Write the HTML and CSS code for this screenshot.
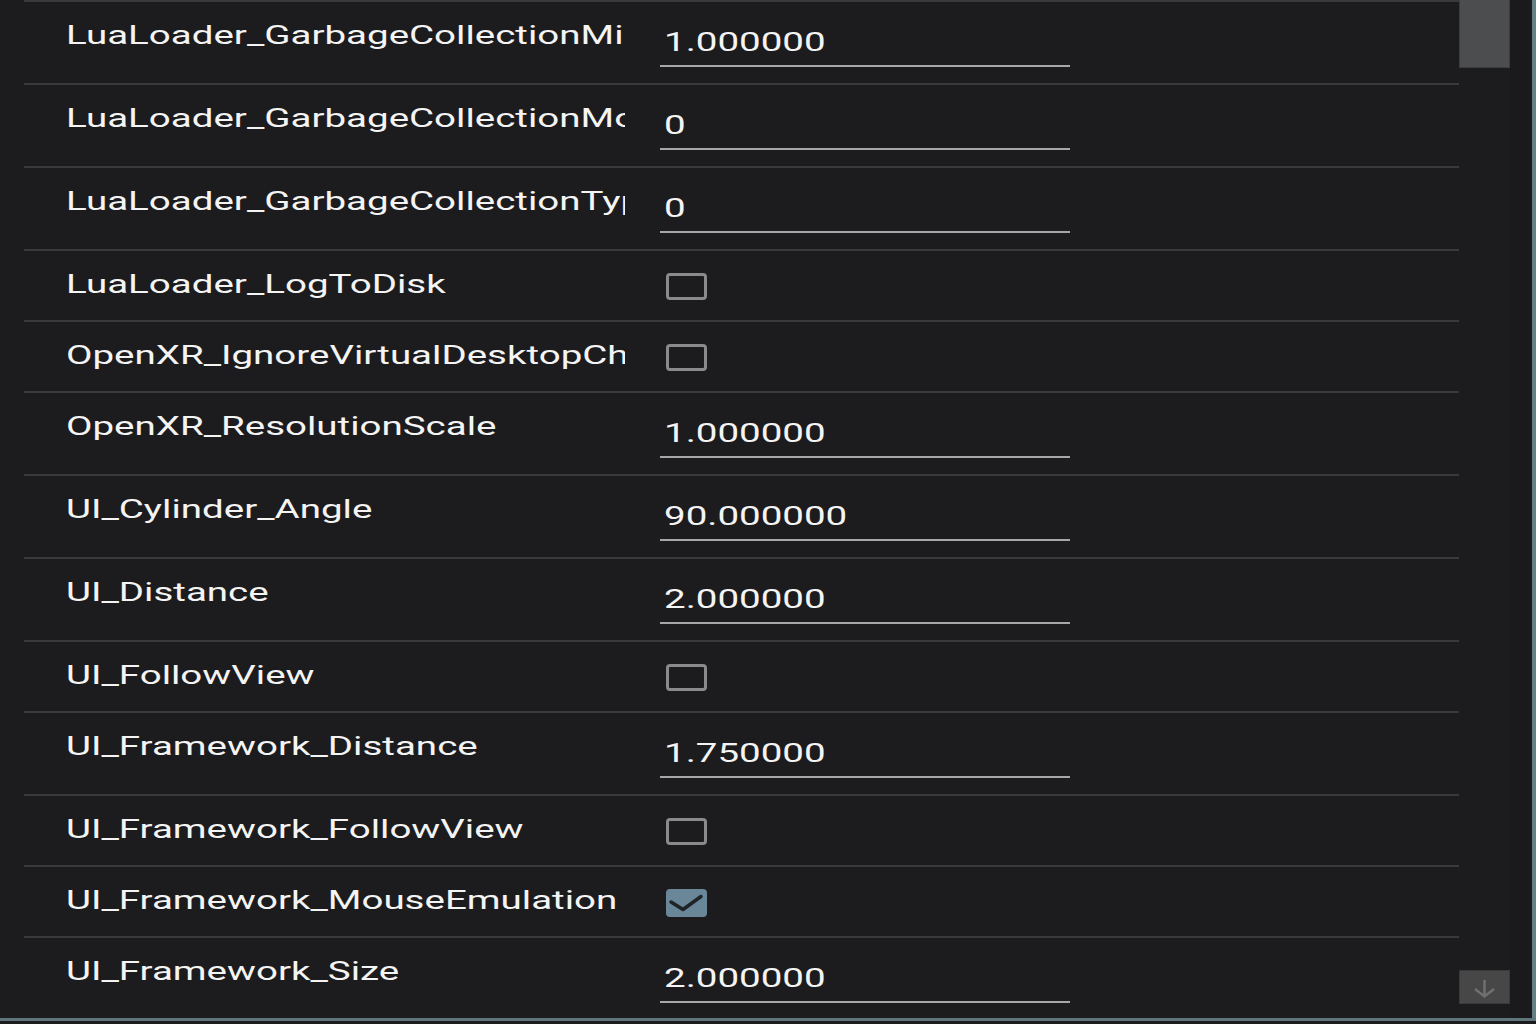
FILE: index.html
```html
<!DOCTYPE html>
<html lang="en">
<head>
    <meta charset="UTF-8">
    <title>Settings</title>
    <link rel="stylesheet" href="styles.css">
</head>
<body>
    <div class="window">
        <div class="settings-list">
            <div class="setting-row text-row">
                <div class="setting-name"><span>LuaLoader_GarbageCollectionMinimumMB</span></div>
                <div class="setting-value"><span class="value-field"><span>1.000000</span></span></div>
            </div>
            <div class="setting-row text-row">
                <div class="setting-name"><span>LuaLoader_GarbageCollectionMode</span></div>
                <div class="setting-value"><span class="value-field"><span>0</span></span></div>
            </div>
            <div class="setting-row text-row">
                <div class="setting-name"><span>LuaLoader_GarbageCollectionType</span></div>
                <div class="setting-value"><span class="value-field"><span>0</span></span></div>
            </div>
            <div class="setting-row check-row">
                <div class="setting-name"><span>LuaLoader_LogToDisk</span></div>
                <div class="setting-value"><span class="checkbox"></span></div>
            </div>
            <div class="setting-row check-row">
                <div class="setting-name"><span>OpenXR_IgnoreVirtualDesktopChecks</span></div>
                <div class="setting-value"><span class="checkbox"></span></div>
            </div>
            <div class="setting-row text-row">
                <div class="setting-name"><span>OpenXR_ResolutionScale</span></div>
                <div class="setting-value"><span class="value-field"><span>1.000000</span></span></div>
            </div>
            <div class="setting-row text-row">
                <div class="setting-name"><span>UI_Cylinder_Angle</span></div>
                <div class="setting-value"><span class="value-field"><span>90.000000</span></span></div>
            </div>
            <div class="setting-row text-row">
                <div class="setting-name"><span>UI_Distance</span></div>
                <div class="setting-value"><span class="value-field"><span>2.000000</span></span></div>
            </div>
            <div class="setting-row check-row">
                <div class="setting-name"><span>UI_FollowView</span></div>
                <div class="setting-value"><span class="checkbox"></span></div>
            </div>
            <div class="setting-row text-row">
                <div class="setting-name"><span>UI_Framework_Distance</span></div>
                <div class="setting-value"><span class="value-field"><span>1.750000</span></span></div>
            </div>
            <div class="setting-row check-row">
                <div class="setting-name"><span>UI_Framework_FollowView</span></div>
                <div class="setting-value"><span class="checkbox"></span></div>
            </div>
            <div class="setting-row check-row">
                <div class="setting-name"><span>UI_Framework_MouseEmulation</span></div>
                <div class="setting-value">
                    <span class="checkbox checked">
                        <svg viewBox="0 0 41 28" width="41" height="28">
                            <path d="M5 13 L17 20.5 L35 7.5" fill="none" stroke="#1f2428" stroke-width="3.5" stroke-linecap="round" stroke-linejoin="round"/>
                        </svg>
                    </span>
                </div>
            </div>
            <div class="setting-row text-row last-row">
                <div class="setting-name"><span>UI_Framework_Size</span></div>
                <div class="setting-value"><span class="value-field"><span>2.000000</span></span></div>
            </div>
        </div>

        <div class="scrollbar">
            <div class="scroll-thumb"></div>
            <div class="scroll-down">
                <svg viewBox="0 0 50 34" width="50" height="34">
                    <path d="M24.5 9 V25 M15 18 L24.5 25.5 L34 18" fill="none" stroke="#707070" stroke-width="2.5"/>
                </svg>
            </div>
        </div>
        <div class="gutter"></div>
    </div>
</body>
</html>
```

FILE: styles.css
```css
* {
    box-sizing: border-box;
    margin: 0;
    padding: 0;
}

body {
    background-color: #1c1c1e;
    font-family: Roboto, 'Liberation Sans', sans-serif;
    color: #f4f4f4;
    width: 1536px;
    height: 1024px;
    overflow: hidden;
}

.window {
    display: flex;
    height: 1021px;
    border-bottom: 3px solid #5f777c;
}

.settings-list {
    width: 1459px;
    padding-left: 24px;
    display: flex;
    flex-direction: column;
}

.setting-row {
    display: flex;
    align-items: flex-start;
    border-top: 2px solid #3a3a3c;
    flex-shrink: 0;
}

.text-row {
    height: 83px;
}

.check-row {
    height: 71px;
}

.last-row {
    height: 84px;
}

/* the panel is drawn wide: glyphs are stretched horizontally */
.setting-name {
    width: 559px;
    margin-left: 42px;
    padding-top: 19px;
    font-size: 25px;
    line-height: 30px;
    white-space: nowrap;
    overflow: hidden;
}

.setting-name span,
.value-field span {
    display: inline-block;
    transform: scaleX(1.54);
    transform-origin: left center;
}

.setting-value {
    margin-left: 35px;
    width: 410px;
}

.value-field {
    display: block;
    border-bottom: 2px solid #a7a7a7;
    padding: 26px 0 7px 4px;
    font-size: 25px;
    line-height: 30px;
    white-space: nowrap;
}

.checkbox {
    display: block;
    width: 41px;
    height: 27px;
    margin: 22px 0 0 6px;
    border: 3px solid #8a8a8a;
    border-radius: 4px;
}

.checkbox.checked {
    height: 28px;
    border: none;
    background-color: #6a8799;
}

.checkbox svg {
    display: block;
}

.scrollbar {
    width: 51px;
    display: flex;
    flex-direction: column;
    justify-content: space-between;
    padding-bottom: 14px;
}

.scroll-thumb {
    height: 68px;
    background-color: #4c4d4f;
    border: 1px solid #3c3d3f;
    border-top: none;
}

.scroll-down {
    height: 34px;
    background-color: #474747;
    border: 1px solid #3a3a3a;
}

.scroll-down svg {
    display: block;
}

.gutter {
    flex: 1;
    background-color: #1a1a1c;
    border-right: 4px solid #637f85;
}
```
